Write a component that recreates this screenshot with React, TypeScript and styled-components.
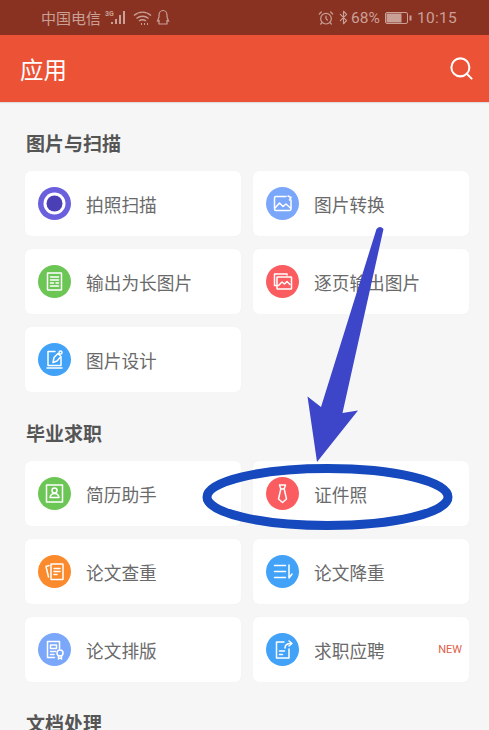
import React from 'react'
import styled, { createGlobalStyle } from 'styled-components'
import { AlarmClock, Bluetooth, Search } from 'lucide-react'

const GlobalStyle = createGlobalStyle`
  html, body {
    margin: 0;
    padding: 0;
    height: 730px;
    overflow: hidden;
    background: #f6f6f6;
    font-family: "Noto Sans CJK SC", "Noto Sans", sans-serif;
  }
`
const Page = styled.div`
  position: relative;
  width: 489px;
  height: 730px;
  overflow: hidden;
  background: #f6f6f6;
`
const StatusBar = styled.div`
  height: 35px;
  background: #8a3222;
  color: #c9a096;
  display: flex;
  align-items: center;
  justify-content: space-between;
  padding: 0 32px 0 41px;
`
const StatusGroup = styled.div`
  display: flex;
  align-items: center;
  gap: ${(p: { $gap: number }) => p.$gap}px;
`
const Carrier = styled.span`
  font-size: 15px;
  line-height: 20px;
`
const Percent = styled.span`
  font-family: Roboto, sans-serif;
  font-size: 15.5px;
  line-height: 20px;
  margin: 0 3px 0 -2px;
`
const Time = styled.span`
  font-family: Roboto, sans-serif;
  font-size: 15.5px;
  line-height: 20px;
  margin-left: 3px;
  letter-spacing: 0.3px;
`
const Header = styled.header`
  height: 67px;
  background: #eb5236;
  color: #fff;
  display: flex;
  align-items: center;
  justify-content: space-between;
  padding: 0 14px 0 20px;
  box-shadow: 0 1px 1px rgba(0, 0, 0, 0.1);
`
const HeaderTitle = styled.h1`
  margin: 0;
  font-size: 23.5px;
  font-weight: 400;
  line-height: 32px;
`
const Main = styled.main`
  padding: 28px 21px 0 25px;
  display: flex;
  flex-direction: column;
  gap: 28px;
`
const SectionTitle = styled.h2`
  margin: 0 0 15px 1px;
  font-size: 19px;
  font-weight: 700;
  line-height: 26px;
  color: #555;
`
const Grid = styled.div`
  display: grid;
  grid-template-columns: 216px 216px;
  grid-auto-rows: 65px;
  column-gap: 12px;
  row-gap: 13px;
`
const Card = styled.div`
  background: #fff;
  border-radius: 6px;
  display: flex;
  align-items: center;
  gap: 15px;
  padding: 0 7px 0 13px;
  box-shadow: 0 0 1px rgba(0, 0, 0, 0.06);
`
const IconCircle = styled.div<{ $color: string }>`
  width: 33px;
  height: 33px;
  flex: none;
  border-radius: 50%;
  background: ${(p) => p.$color};
  display: flex;
  align-items: center;
  justify-content: center;
  svg {
    display: block;
  }
`
const CardLabel = styled.span`
  font-size: 17.7px;
  line-height: 24px;
  color: #6a6a6a;
`
const NewTag = styled.span`
  margin-left: auto;
  font-family: Roboto, sans-serif;
  font-size: 11px;
  color: #e0604a;
`
const Overlay = styled.svg`
  position: absolute;
  left: 0;
  top: 0;
  pointer-events: none;
`

const line = {
  fill: 'none',
  stroke: '#fff',
  strokeWidth: 1.5,
  strokeLinecap: 'round' as const,
  strokeLinejoin: 'round' as const,
}

const Glyph = ({ children }: { children: React.ReactNode }) => (
  <svg width="33" height="33" viewBox="0 0 33 33" {...line}>
    {children}
  </svg>
)

const ScanIcon = () => (
  <svg width="33" height="33" viewBox="0 0 33 33">
    <circle cx="16.5" cy="16.5" r="11" fill="#fff" />
    <circle cx="16.5" cy="16.5" r="8" fill="#4b3fb5" />
  </svg>
)
const ConvertIcon = () => (
  <Glyph>
    <path d="M20 9.500H10a1.500 1.500 0 0 0-1.500 1.500v11a1.500 1.500 0 0 0 1.500 1.500h13.500a1.500 1.500 0 0 0 1.500-1.500v-9" />
    <path d="M9 21l4.500-5 3.500 3.500 3-2.500 4.500 4" />
    <path d="M22 9l3 1.500-1.500 2.500" />
  </Glyph>
)
const LongImageIcon = () => (
  <Glyph>
    <rect x="9.500" y="8" width="14" height="17" rx="0.500" />
    <path d="M12.500 12h8M12.500 15h8M12.500 18h3M18 18h2.500M12.500 21h8" />
  </Glyph>
)
const PagesIcon = () => (
  <Glyph>
    <path d="M21 10V9H8.500v11.500h2" />
    <rect x="11" y="12" width="14.500" height="12" rx="0.500" />
    <path d="M12.500 20.500l3.500-3.500 2.500 2 2.500-2.500 3 3" />
  </Glyph>
)
const DesignIcon = () => (
  <Glyph>
    <path d="M17 8.500H10v14h13v-8" />
    <path d="M15 19.500l1-5 4-4 3 3-4 4.500z" />
    <path d="M9 25h15" />
    <circle cx="22.500" cy="9.500" r="1.500" />
  </Glyph>
)
const ResumeIcon = () => (
  <Glyph>
    <rect x="8.500" y="8" width="16" height="17" />
    <circle cx="16.500" cy="13.500" r="2.500" />
    <path d="M12 20.500c.500-3 2-4 4.500-4s4 1 4.500 4z" />
  </Glyph>
)
const TieIcon = () => (
  <Glyph>
    <path d="M13.500 8h6l-1.300 4h-3.400z" />
    <path d="M14.800 12l-2.300 10 4 3.500 4-3.500-2.300-10" />
  </Glyph>
)
const CheckIcon = () => (
  <Glyph>
    <rect x="13" y="9" width="12" height="15.500" rx="0.500" />
    <path d="M16 13.500h6M16 16.500h6M16 19.500h3" />
    <path d="M11 10.500l-3 1 2.500 10.500" />
  </Glyph>
)
const ReduceIcon = () => (
  <Glyph>
    <path d="M8.500 10.500h11M8.500 16.500h11M8.500 22.500h11" />
    <path d="M23 10v13l3-4" />
  </Glyph>
)
const FormatIcon = () => (
  <Glyph>
    <path d="M21.500 16V8.500H9.500v16h7" />
    <path d="M12.500 12h6v3.500h-6zM12.500 18.500h5M12.500 21.500h3.500" />
    <circle cx="22" cy="20" r="3" />
    <path d="M20.500 23v3l1.500-1 1.500 1v-3" />
  </Glyph>
)
const ApplyIcon = () => (
  <Glyph>
    <path d="M18 9h-7.500v16h12.500v-9" />
    <path d="M19 15c0-3 2-4.500 6-4.500" />
    <path d="M23 8l3 2.500-3 2.500" />
    <path d="M13.500 18h5M13.500 21.500h3" />
  </Glyph>
)

const sections = [
  {
    title: '图片与扫描',
    items: [
      { label: '拍照扫描', color: '#6a5fdc', icon: <ScanIcon /> },
      { label: '图片转换', color: '#7ba7fb', icon: <ConvertIcon /> },
      { label: '输出为长图片', color: '#6cc655', icon: <LongImageIcon /> },
      { label: '逐页输出图片', color: '#fa5c60', icon: <PagesIcon /> },
      { label: '图片设计', color: '#41a2f8', icon: <DesignIcon /> },
    ],
  },
  {
    title: '毕业求职',
    items: [
      { label: '简历助手', color: '#6cc655', icon: <ResumeIcon /> },
      { label: '证件照', color: '#fa5c60', icon: <TieIcon /> },
      { label: '论文查重', color: '#fb8a2c', icon: <CheckIcon /> },
      { label: '论文降重', color: '#41a2f8', icon: <ReduceIcon /> },
      { label: '论文排版', color: '#7ba7fb', icon: <FormatIcon /> },
      { label: '求职应聘', color: '#41a2f8', icon: <ApplyIcon />, isNew: true },
    ],
  },
]

const SignalIcon = () => (
  <svg width="24" height="18" viewBox="0 0 24 18" fill="#c9a096">
    <text x="0" y="7" fontSize="7" fontWeight="700" fontFamily="Roboto, sans-serif">3G</text>
    <rect x="6" y="13" width="2" height="2" />
    <rect x="10" y="10" width="2" height="5" />
    <rect x="14" y="6" width="2" height="9" />
    <rect x="18" y="2" width="2" height="13" />
  </svg>
)
const WifiIcon = () => (
  <svg width="19" height="16" viewBox="0 0 19 16" fill="none" stroke="#c9a096" strokeWidth="1.4">
    <path d="M1 5.500c5-4.500 12-4.500 17 0" />
    <path d="M3.500 8.500c3.500-3 8.500-3 12 0" />
    <path d="M6 11c2-1.500 5-1.500 7 0" />
    <path d="M8 14h1M11 14h1M14 14h1" strokeWidth="2" />
  </svg>
)
const QQIcon = () => (
  <svg width="14" height="17" viewBox="0 0 14 17" fill="none" stroke="#c9a096" strokeWidth="1.200">
    <path d="M3 8V6a4 4.500 0 0 1 8 0v2l1.500 4-1.500-.5C10.500 13 11.500 14.500 11 15H3c-.5-.5.500-2 0-3.500L1.500 12z" />
  </svg>
)
const BatteryIcon = () => (
  <svg width="27" height="14" viewBox="0 0 27 14">
    <rect x="0.500" y="1.500" width="22" height="11" rx="1.500" fill="none" stroke="#c9a096" />
    <rect x="1.500" y="2.500" width="15" height="9" fill="#c9a096" />
    <rect x="24.500" y="4.500" width="2" height="5" fill="#c9a096" />
  </svg>
)

export default function App() {
  return (
    <Page>
      <GlobalStyle />
      <StatusBar>
        <StatusGroup $gap={4}>
          <Carrier>中国电信</Carrier>
          <SignalIcon />
          <WifiIcon />
          <QQIcon />
        </StatusGroup>
        <StatusGroup $gap={2}>
          <AlarmClock size={16} strokeWidth={1.8} />
          <Bluetooth size={15} strokeWidth={1.8} />
          <Percent>68%</Percent>
          <BatteryIcon />
          <Time>10:15</Time>
        </StatusGroup>
      </StatusBar>
      <Header>
        <HeaderTitle>应用</HeaderTitle>
        <Search size={27} strokeWidth={1.8} />
      </Header>
      <Main>
        {sections.map((section) => (
          <section key={section.title}>
            <SectionTitle>{section.title}</SectionTitle>
            <Grid>
              {section.items.map((item) => (
                <Card key={item.label}>
                  <IconCircle $color={item.color}>{item.icon}</IconCircle>
                  <CardLabel>{item.label}</CardLabel>
                  {item.isNew && <NewTag>NEW</NewTag>}
                </Card>
              ))}
            </Grid>
          </section>
        ))}
        <section>
          <SectionTitle>文档处理</SectionTitle>
        </section>
      </Main>
      {/* hand-drawn annotation over the page */}
      <Overlay width="489" height="730" viewBox="0 0 489 730">
        <path
          d="M376.500 229 Q380 225 383.500 229 L342.500 413 L358 410.500 L317 462 L307.500 396.500 L321 407 Z"
          fill="#3d45c9"
        />
        <ellipse cx="327.500" cy="497" rx="120.500" ry="28.500" fill="none" stroke="#1549bd" strokeWidth="9" />
      </Overlay>
    </Page>
  )
}
